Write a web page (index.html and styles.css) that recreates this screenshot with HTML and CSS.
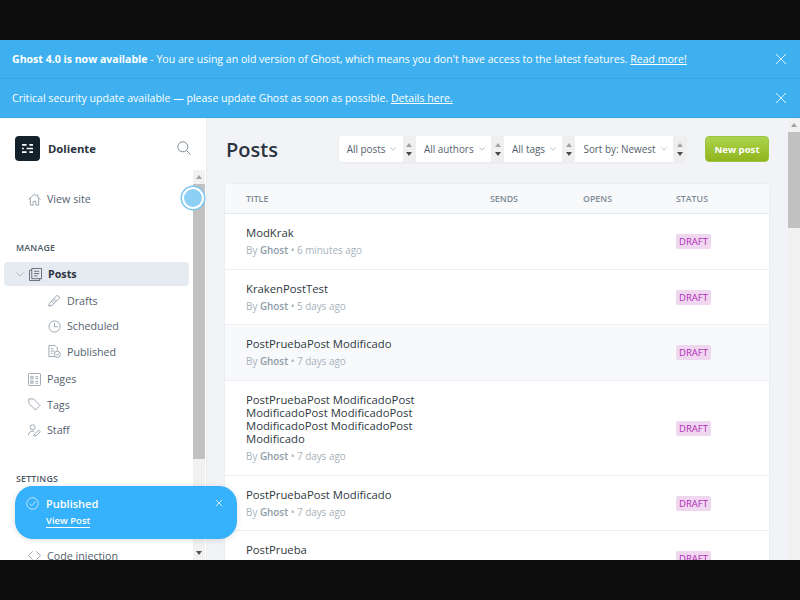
FILE: index.html
```html
<!DOCTYPE html>
<html lang="en">
<head>
    <meta charset="UTF-8">
    <title>Posts - Doliente</title>
    <link rel="stylesheet" href="styles.css">
</head>
<body>
    <div class="letterbox"></div>
    <div class="screen">
        <div class="banner">
            <p><b>Ghost 4.0 is now available</b> - You are using an old version of Ghost, which means you don't have access to the latest features. <a>Read more!</a></p>
            <svg class="banner-close" viewBox="0 0 10 10"><path d="M0 0L10 10M10 0L0 10"/></svg>
        </div>
        <div class="banner">
            <p>Critical security update available — please update Ghost as soon as possible. <a>Details here.</a></p>
            <svg class="banner-close" viewBox="0 0 10 10"><path d="M0 0L10 10M10 0L0 10"/></svg>
        </div>

        <div class="app">
            <aside class="sidebar">
                <div class="brand">
                    <div class="brand-logo">
                        <svg viewBox="0 0 14 12"><path d="M1 2H6M9 2H13M1 6H3M6 6H13M1 10H6M9 10H13"/></svg>
                    </div>
                    <span class="brand-name">Doliente</span>
                    <svg class="brand-search" viewBox="0 0 14 14"><circle cx="5.8" cy="5.8" r="5"/><path d="M9.5 9.5L13.5 13.5"/></svg>
                </div>
                <div class="side-body">
                    <nav class="side-nav">
                        <a class="nav-item nav-site">
                            <svg class="icon" viewBox="0 0 14 14"><path d="M.5 7L7 1.2 13.5 7M2.5 5.5V13H5.500V9H8.500V13H11.500V5.500M10.500 1.500V3.500"/></svg>
                            View site
                        </a>
                        <h4 class="nav-title">Manage</h4>
                        <a class="nav-item nav-posts">
                            <svg class="chevron" viewBox="0 0 10 6"><path d="M.5 .5L5 5 9.500 .5"/></svg>
                            <svg class="icon" viewBox="0 0 14 14"><path d="M3 .5H13.500V11.500H3ZM3 2.500H.5V13.500H11.500V11.500M5.500 3.500H11M5.500 6H11M5.500 8.500H9"/></svg>
                            Posts
                        </a>
                        <a class="nav-item nav-sub">
                            <svg class="icon" viewBox="0 0 14 14"><path d="M.8 13.200L1.800 9.500 10 1.200 12.800 4 4.500 12.200ZM3.500 8L6 10.500M5 6.500L7.500 9M6.500 5L9 7.500"/></svg>
                            Drafts
                        </a>
                        <a class="nav-item nav-sub">
                            <svg class="icon" viewBox="0 0 14 14"><circle cx="7" cy="7" r="6"/><path d="M7 3V7.300H10.500"/></svg>
                            Scheduled
                        </a>
                        <a class="nav-item nav-sub">
                            <svg class="icon" viewBox="0 0 14 14"><path d="M7 12.500H1V.5H7.500L10 3V6M3 4H6M3 6.500H7M3 9H5"/><circle cx="10" cy="10" r="3.300"/><path d="M8.500 10L9.600 11.200 11.500 9"/></svg>
                            Published
                        </a>
                        <a class="nav-item nav-top">
                            <svg class="icon" viewBox="0 0 14 14"><rect x=".5" y=".5" width="13" height="13" rx="1"/><path d="M3 3.500H5.500V6H3ZM3 8.500H5.500V11H3ZM8 4H11M8 6H11M8 9H11M8 11H11"/></svg>
                            Pages
                        </a>
                        <a class="nav-item nav-top">
                            <svg class="icon" viewBox="0 0 14 14"><path d="M.8 1H6L13 8 8 13 1 6ZM3.500 3.500H3.600"/></svg>
                            Tags
                        </a>
                        <a class="nav-item nav-top">
                            <svg class="icon" viewBox="0 0 14 14"><circle cx="5" cy="3.500" r="2.700"/><path d="M.5 12C.5 8.500 3 7.500 6.500 7.800M6.500 12.800L7 10.800 11.500 6.500 13.300 8.200 9 12.500Z"/></svg>
                            Staff
                        </a>
                        <h4 class="nav-title nav-settings">Settings</h4>
                        <a class="nav-item nav-code">
                            <svg class="icon" viewBox="0 0 14 14"><path d="M5 2.500L.5 7 5 11.500M9 2.500L13.500 7 9 11.500"/></svg>
                            Code injection
                        </a>
                    </nav>
                    <div class="scrollbar side-scroll">
                        <span class="arrow-up"></span>
                        <div class="thumb"></div>
                        <span class="arrow-down"></span>
                    </div>
                </div>
                <span class="pulse"></span>
            </aside>

            <main class="content">
                <div class="content-inner">
                    <header class="page-head">
                        <h1>Posts</h1>
                        <div class="filters">
                            <div class="filter"><span>All posts</span><svg class="caret" viewBox="0 0 8 5"><path d="M.5 .5L4 4 7.500 .5"/></svg></div>
                            <div class="spin"><i class="spin-up"></i><i class="spin-down"></i></div>
                            <div class="filter"><span>All authors</span><svg class="caret" viewBox="0 0 8 5"><path d="M.5 .5L4 4 7.500 .5"/></svg></div>
                            <div class="spin"><i class="spin-up"></i><i class="spin-down"></i></div>
                            <div class="filter"><span>All tags</span><svg class="caret" viewBox="0 0 8 5"><path d="M.5 .5L4 4 7.500 .5"/></svg></div>
                            <div class="spin"><i class="spin-up"></i><i class="spin-down"></i></div>
                            <div class="filter"><span>Sort by: Newest</span><svg class="caret" viewBox="0 0 8 5"><path d="M.5 .5L4 4 7.500 .5"/></svg></div>
                            <div class="spin"><i class="spin-up"></i><i class="spin-down"></i></div>
                        </div>
                        <button class="new-post">New post</button>
                    </header>

                    <section class="post-list">
                        <div class="row row-head">
                            <div class="col-title">Title</div>
                            <div class="col-sends">Sends</div>
                            <div class="col-opens">Opens</div>
                            <div class="col-status">Status</div>
                        </div>
                        <div class="row">
                            <div class="col-title">
                                <h3>ModKrak</h3>
                                <p class="meta">By <b>Ghost</b> • 6 minutes ago</p>
                            </div>
                            <div class="col-status"><span class="badge">DRAFT</span></div>
                        </div>
                        <div class="row">
                            <div class="col-title">
                                <h3>KrakenPostTest</h3>
                                <p class="meta">By <b>Ghost</b> • 5 days ago</p>
                            </div>
                            <div class="col-status"><span class="badge">DRAFT</span></div>
                        </div>
                        <div class="row row-hover">
                            <div class="col-title">
                                <h3>PostPruebaPost Modificado</h3>
                                <p class="meta">By <b>Ghost</b> • 7 days ago</p>
                            </div>
                            <div class="col-status"><span class="badge">DRAFT</span></div>
                        </div>
                        <div class="row">
                            <div class="col-title">
                                <h3>PostPruebaPost ModificadoPost ModificadoPost ModificadoPost ModificadoPost ModificadoPost Modificado</h3>
                                <p class="meta">By <b>Ghost</b> • 7 days ago</p>
                            </div>
                            <div class="col-status"><span class="badge">DRAFT</span></div>
                        </div>
                        <div class="row">
                            <div class="col-title">
                                <h3>PostPruebaPost Modificado</h3>
                                <p class="meta">By <b>Ghost</b> • 7 days ago</p>
                            </div>
                            <div class="col-status"><span class="badge">DRAFT</span></div>
                        </div>
                        <div class="row">
                            <div class="col-title">
                                <h3>PostPrueba</h3>
                                <p class="meta">By <b>Ghost</b> • 7 days ago</p>
                            </div>
                            <div class="col-status"><span class="badge">DRAFT</span></div>
                        </div>
                    </section>
                </div>
                <div class="scrollbar main-scroll">
                    <span class="arrow-up"></span>
                    <div class="thumb"></div>
                </div>
            </main>

            <div class="toast">
                <svg class="toast-check" viewBox="0 0 14 14"><circle cx="7" cy="7" r="6.200"/><path d="M4 7.200L6.200 9.400 10.200 4.800"/></svg>
                <div class="toast-text">
                    <strong>Published</strong>
                    <a>View Post</a>
                </div>
                <svg class="toast-close" viewBox="0 0 10 10"><path d="M1 1L9 9M9 1L1 9"/></svg>
            </div>
        </div>
    </div>
    <div class="letterbox"></div>
</body>
</html>
```

FILE: styles.css
```css
* {
    box-sizing: border-box;
}
html, body {
    height: 600px;
    overflow: hidden;
}
body {
    margin: 0;
    display: flex;
    flex-direction: column;
    background: #0c0c0d;
    font-family: "Open Sans", "Noto Sans", sans-serif;
    color: #394047;
}
.letterbox {
    height: 40px;
    flex: none;
    background: #0c0c0d;
}
.screen {
    height: 520px;
    display: flex;
    flex-direction: column;
    overflow: hidden;
}

/* banners */
.banner {
    height: 39px;
    flex: none;
    display: flex;
    align-items: center;
    justify-content: space-between;
    padding: 0 14px 0 12px;
    background: #3eb0ef;
    border-bottom: 1px solid #38a6e4;
    color: #fff;
    font-size: 10.55px;
}
.banner p {
    margin: 0;
    white-space: nowrap;
}
.banner a {
    text-decoration: underline;
}
.banner-close {
    width: 10px;
    height: 10px;
    fill: none;
    stroke: #dff2fd;
    stroke-width: 1;
}

.app {
    flex: 1;
    min-height: 0;
    display: flex;
    position: relative;
}

/* sidebar */
.sidebar {
    width: 207px;
    flex: none;
    display: flex;
    flex-direction: column;
    position: relative;
    background: #fff;
    border-right: 1px solid #e8ecf1;
}
.brand {
    height: 52px;
    flex: none;
    display: flex;
    align-items: center;
    padding: 8px 15px 0 15px;
}
.brand-logo {
    width: 25px;
    height: 25px;
    border-radius: 4px;
    background: #15212a;
    display: flex;
    align-items: center;
    justify-content: center;
}
.brand-logo svg {
    width: 13px;
    height: 11px;
    fill: none;
    stroke: #fff;
    stroke-width: 1.8;
}
.brand-name {
    margin-left: 8px;
    font-size: 11.3px;
    font-weight: 700;
    color: #2b3440;
}
.brand-search {
    width: 14px;
    height: 14px;
    margin-left: auto;
    fill: none;
    stroke: #7d8b97;
    stroke-width: 1;
}
.side-body {
    flex: 1;
    min-height: 0;
    display: flex;
    overflow: hidden;
}
.side-nav {
    flex: 1;
    min-width: 0;
    padding: 17px 4px 0;
}
.nav-item {
    height: 25.5px;
    display: flex;
    align-items: center;
    gap: 6px;
    padding-left: 24px;
    font-size: 10.7px;
    color: #55616d;
}
.nav-item .icon {
    width: 13px;
    height: 13px;
    flex: none;
    fill: none;
    stroke: #7c8b98;
    stroke-width: .8;
}
.nav-site {
    height: 24px;
}
.nav-sub + .nav-top {
    margin-top: 2px;
}
.nav-title {
    margin: 30px 0 0 12px;
    height: 14px;
    font-size: 8.8px;
    line-height: 14px;
    font-weight: 600;
    letter-spacing: .2px;
    text-transform: uppercase;
    color: #4c5863;
}
.nav-settings {
    margin-top: 29px;
}
.nav-posts {
    height: 24px;
    margin-top: 7px;
    margin-bottom: 2px;
    padding-left: 12px;
    border-radius: 4px;
    background: #e6eaf1;
    font-weight: 700;
    color: #2b3440;
}
.nav-posts .icon {
    stroke: #394652;
    margin-left: -1px;
}
.chevron {
    width: 8px;
    height: 5px;
    flex: none;
    fill: none;
    stroke: #8e9ba6;
    stroke-width: .8;
}
.nav-sub {
    padding-left: 44px;
}
.nav-code {
    margin-top: 57px;
}
.pulse {
    position: absolute;
    left: 182px;
    top: 69px;
    width: 22px;
    height: 22px;
    border-radius: 50%;
    background: #8ecff5;
    border: 2px solid #fff;
    box-shadow: 0 0 0 1.5px #7cc6f2;
}

/* scrollbars */
.scrollbar {
    width: 12px;
    flex: none;
    display: flex;
    flex-direction: column;
    align-items: center;
    background: #f1f1f1;
}
.side-scroll {
    margin-right: 1px;
}
.arrow-up, .arrow-down {
    width: 0;
    height: 0;
    margin: 5px 0;
    flex: none;
    border-left: 3.5px solid transparent;
    border-right: 3.5px solid transparent;
}
.arrow-up {
    border-bottom: 4px solid #a3a3a3;
}
.arrow-down {
    border-top: 4px solid #505050;
}
.side-scroll .thumb {
    width: 100%;
    height: 275px;
    background: #c1c1c1;
}
.side-scroll .arrow-down {
    margin-top: auto;
}
.main-scroll .thumb {
    width: 100%;
    height: 96px;
    background: #c1c1c1;
}

/* main column */
.content {
    flex: 1;
    min-width: 0;
    display: flex;
    background: #f1f3f6;
}
.content-inner {
    flex: 1;
    min-width: 0;
    padding: 18px 19px 0 18px;
    overflow: hidden;
}
.page-head {
    height: 26px;
    display: flex;
    align-items: center;
}
.page-head h1 {
    margin: 0 0 0 1px;
    font-size: 20px;
    font-weight: 600;
    color: #2b3440;
}
.filters {
    display: flex;
    margin-left: auto;
    height: 26px;
    border-radius: 4px;
    box-shadow: 0 1px 2px rgba(0, 0, 0, .05);
}
.filter {
    display: flex;
    align-items: center;
    gap: 5px;
    padding: 0 6.5px 0 8px;
    background: #fff;
    font-size: 9.9px;
    color: #55616d;
    white-space: nowrap;
}
.filter:first-child {
    border-radius: 4px 0 0 4px;
}
.caret {
    width: 6px;
    height: 4px;
    fill: none;
    stroke: #9aa6b0;
    stroke-width: .9;
}
.spin {
    width: 13px;
    display: flex;
    flex-direction: column;
    align-items: center;
    justify-content: space-around;
    padding: 4px 0;
    background: #efefef;
}
.spin i {
    width: 0;
    height: 0;
    border-left: 3.5px solid transparent;
    border-right: 3.5px solid transparent;
}
.spin-up {
    border-bottom: 4px solid #a3a3a3;
}
.spin-down {
    border-top: 4px solid #4a4a4a;
}
.new-post {
    width: 64px;
    height: 26px;
    margin-left: 19px;
    padding: 0;
    border: 1px solid #9dc43e;
    border-radius: 4px;
    background: linear-gradient(#acd34c, #90b51e);
    color: #fff;
    font: 700 9.6px "Open Sans", sans-serif;
}

/* posts table */
.post-list {
    margin-top: 22px;
    background: #fff;
    border-radius: 4px 4px 0 0;
    box-shadow: 0 0 2px rgba(0, 0, 0, .08);
}
.row {
    display: flex;
    align-items: flex-start;
    padding: 12px 20px 11.7px 21px;
    border-bottom: 1px solid #edf1f5;
}
.row-head {
    height: 30px;
    align-items: center;
    padding-top: 0;
    padding-bottom: 0;
    background: #f8f9fb;
    border-bottom: 1px solid #e3e9ef;
    border-radius: 4px 4px 0 0;
    font-size: 8.8px;
    font-weight: 600;
    text-transform: uppercase;
    color: #7d8b97;
}
.row-hover {
    background: #f8f9fb;
}
.col-title {
    width: 244px;
    flex: none;
}
.col-sends, .col-opens {
    width: 93px;
    flex: none;
}
.col-status {
    margin-left: 186px;
    align-self: center;
}
.row-head .col-status {
    margin-left: 0;
}
.row h3 {
    margin: 0;
    width: 185px;
    font-size: 11.3px;
    line-height: 13px;
    font-weight: 500;
    color: #2f3942;
}
.meta {
    margin: 4px 0 0;
    font-size: 9.9px;
    line-height: 14px;
    color: #a6b2bc;
    white-space: nowrap;
}
.meta b {
    font-weight: 600;
    color: #8e9ba6;
}
.badge {
    display: block;
    width: 35px;
    height: 15px;
    border-radius: 2px;
    background: #f0d7f0;
    color: #b02cb8;
    font-size: 9.5px;
    line-height: 15px;
    text-align: center;
}

/* toast */
.toast {
    position: absolute;
    left: 15px;
    top: 368px;
    width: 222px;
    height: 53px;
    display: flex;
    padding: 10px 14px 0 11px;
    border-radius: 18px;
    background: #36b1fb;
    box-shadow: 0 1px 6px rgba(0, 0, 0, .12);
    color: #fff;
}
.toast-check {
    width: 13px;
    height: 13px;
    margin-top: 1px;
    flex: none;
    fill: none;
    stroke: #dff2fd;
    stroke-width: .9;
}
.toast-text {
    margin-left: 7px;
    display: flex;
    flex-direction: column;
    align-items: flex-start;
}
.toast-text strong {
    font-size: 11px;
    line-height: 15px;
    font-weight: 600;
}
.toast-text a {
    margin-top: 3px;
    font-size: 9.5px;
    line-height: 13px;
    font-weight: 600;
    border-bottom: 1px solid #fff;
}
.toast-close {
    width: 8px;
    height: 8px;
    margin: 3px 0 0 auto;
    fill: none;
    stroke: #e8f6fe;
    stroke-width: 1.1;
}
```
